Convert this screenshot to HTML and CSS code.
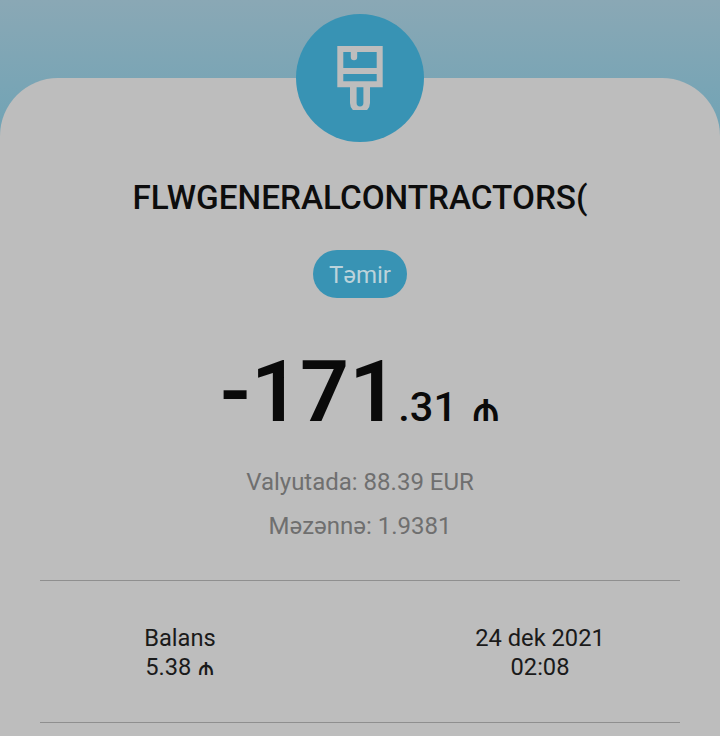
FILE: index.html
```html
<!DOCTYPE html>
<html lang="az">
<head>
<meta charset="utf-8">
<title>Əməliyyat</title>
<link rel="stylesheet" href="styles.css">
</head>
<body>
<main class="screen">
  <section class="card">
    <div class="badge-icon">
      <!-- paint brush: head, ferrule band, drip and handle -->
      <svg class="brush" viewBox="337 46 46 64" width="46" height="64" fill="none" stroke="#bdbdbd" stroke-width="6">
        <path d="M340.3 49H379.7V84.3H340.3Z"/>
        <path d="M340 71H380"/>
        <path d="M354 50V57" stroke-width="6.4" stroke-linecap="round"/>
        <path d="M353.3 86V103a6.7 6.7 0 0 0 13.4 0V86" stroke-width="6.6"/>
      </svg>
    </div>
    <h1 class="merchant">FLWGENERALCONTRACTORS(</h1>
    <span class="category">Təmir</span>
    <p class="amount"><span class="whole">-171</span><span class="cents">.31</span><span class="currency">₼</span></p>
    <p class="note">Valyutada: 88.39 EUR</p>
    <p class="note">Məzənnə: 1.9381</p>
    <div class="details">
      <div class="detail">
        <span>Balans</span>
        <span>5.38 <span class="currency-small">₼</span></span>
      </div>
      <div class="detail">
        <span>24 dek 2021</span>
        <span>02:08</span>
      </div>
    </div>
  </section>
</main>
</body>
</html>
```
FILE: styles.css
```css
* { box-sizing: border-box; }
html, body { margin: 0; height: 100%; }
body {
  font-family: Roboto, Inter, "Noto Sans", sans-serif;
  background: #bdbdbd;
  overflow: hidden;
}
.screen {
  height: 736px;
  padding-top: 78px;
  background: linear-gradient(180deg, #8aa8b5 0, #6fa3b5 140px, #bdbdbd 140px);
}
.card {
  position: relative;
  height: 658px;
  padding: 0 40px;
  background: #bdbdbd;
  border-radius: 58px 58px 0 0;
  display: flex;
  flex-direction: column;
  align-items: center;
}
.badge-icon {
  position: absolute;
  top: -64px;
  left: 296px;
  width: 128px;
  height: 128px;
  border-radius: 50%;
  background: #3893b4;
  display: flex;
  align-items: center;
  justify-content: center;
}
.merchant {
  margin: 102px 0 0;
  font-size: 33.3px;
  line-height: 36px;
  font-weight: 500;
  color: #0d0d0d;
}
.category {
  margin-top: 34px;
  padding: 0 16px;
  height: 48px;
  line-height: 51px;
  border-radius: 24px;
  background: #3893b4;
  color: #bcd3db;
  font-size: 24px;
}
.amount {
  margin: 49px 0 0;
  height: 90px;
  display: flex;
  align-items: baseline;
  color: #0a0a0a;
  line-height: 90px;
}
.whole { font-size: 86px; font-weight: 600; }
.cents { font-size: 41.5px; font-weight: 500; }
.currency { font-size: 40px; font-weight: 500; margin-left: 14px; font-family: Inter, "Noto Sans", sans-serif; }
.note {
  margin: 0;
  font-size: 24px;
  line-height: 44px;
  color: #6f6f6f;
}
.amount + .note { margin-top: 23px; }
.details {
  align-self: stretch;
  margin-top: 32px;
  height: 143px;
  border-top: 1px solid #8f8f8f;
  border-bottom: 1px solid #8f8f8f;
  display: grid;
  grid-template-columns: 280px 280px;
  justify-content: space-between;
  align-content: center;
  padding-top: 2px;
}
.detail {
  display: flex;
  flex-direction: column;
  align-items: center;
  font-size: 23.7px;
  line-height: 29px;
  color: #1a1a1a;
}
.currency-small { font-size: 24px; line-height: 1; font-family: Inter, "Noto Sans", sans-serif; }
```
